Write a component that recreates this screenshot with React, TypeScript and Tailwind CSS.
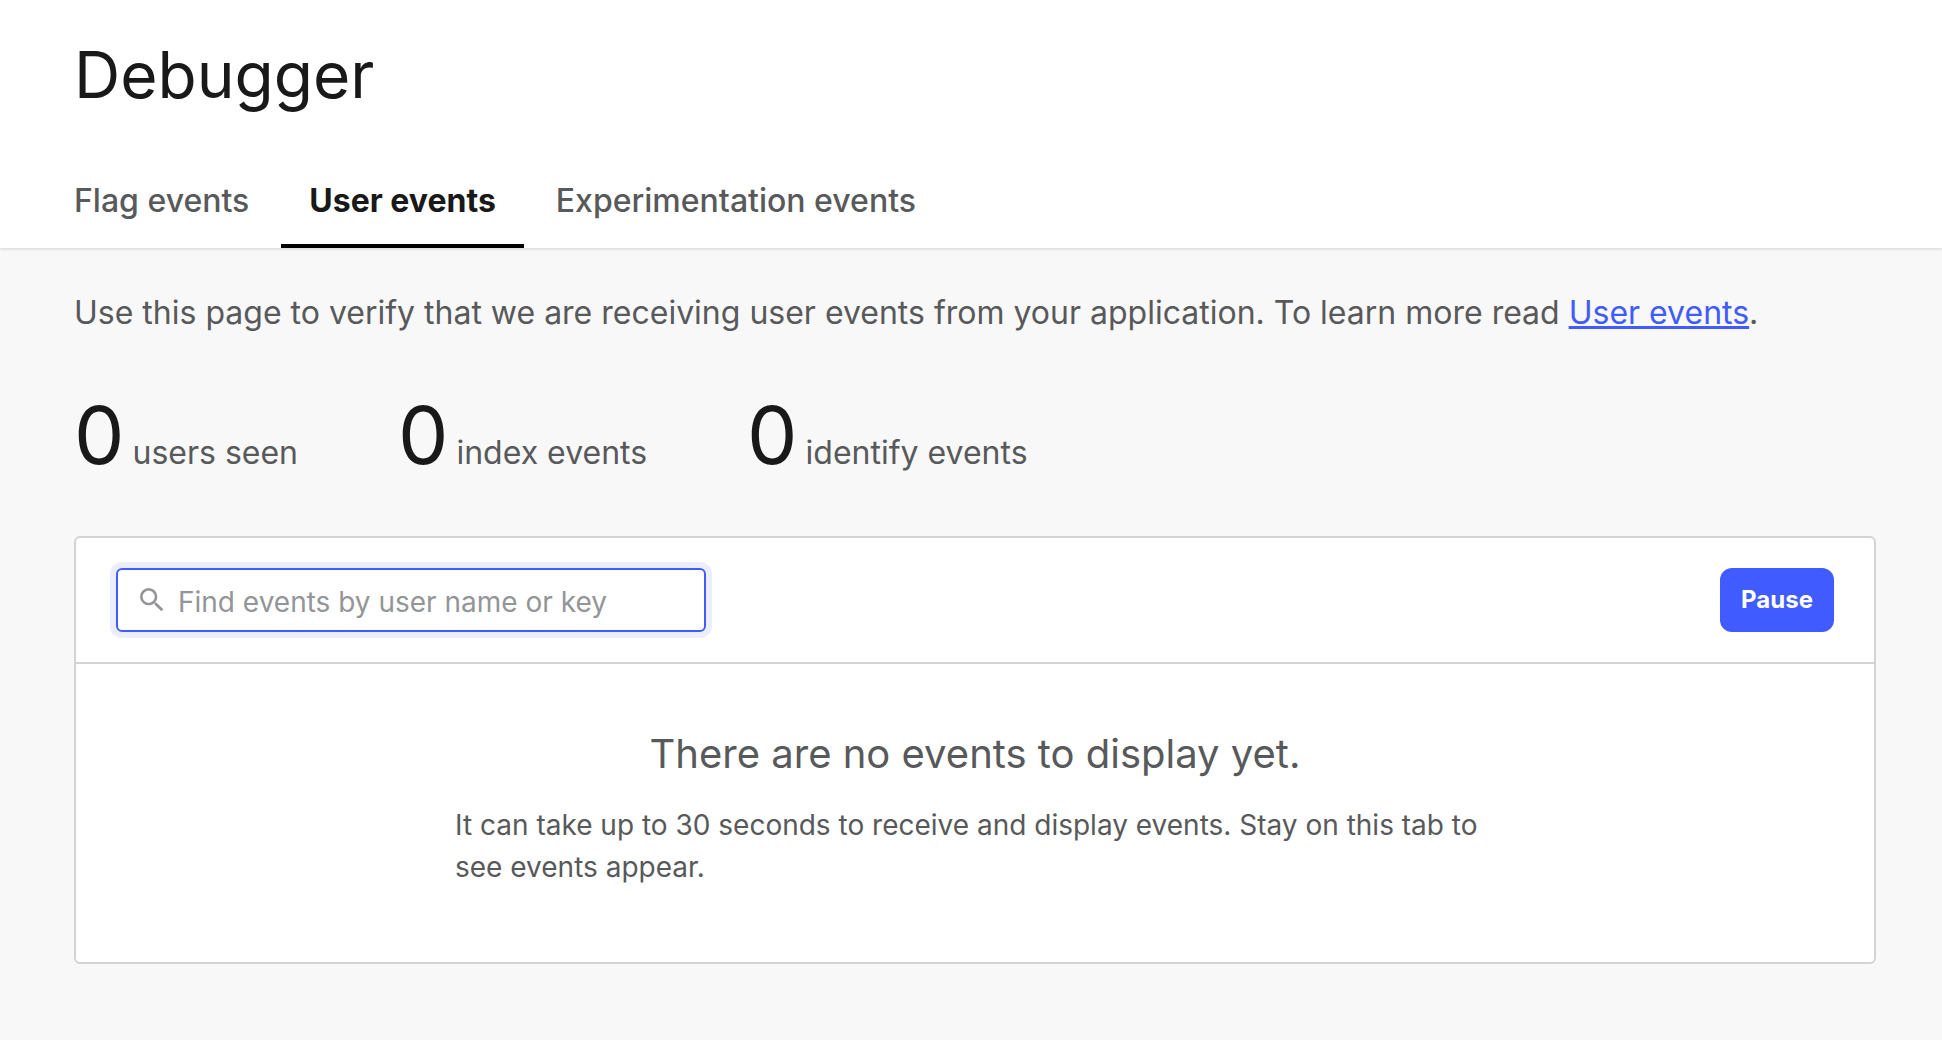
const tabs = [
  { label: "Flag events", active: false },
  { label: "User events", active: true },
  { label: "Experimentation events", active: false },
];

const stats = [
  { value: 0, label: "users seen" },
  { value: 0, label: "index events" },
  { value: 0, label: "identify events" },
];

function Tab({ label, active }: { label: string; active: boolean }) {
  return (
    <button
      type="button"
      role="tab"
      aria-selected={active}
      className={
        active
          ? "h-[76px] border-b-4 border-black px-7 pb-3.5 text-[32px] leading-10 font-bold text-[#191919]"
          : "h-[76px] border-b-4 border-transparent px-7 pb-3.5 text-[32px] leading-10 font-medium text-[#58595b]"
      }
    >
      {label}
    </button>
  );
}

export default function App() {
  return (
    <div className="flex min-h-screen flex-col bg-[#f8f8f8] font-['Inter',sans-serif] text-[#58595b]">
      <header className="bg-white pt-[39px] shadow-[0_2px_2px_#00000018]">
        <h1 className="px-[74px] text-[64px] leading-[72px] text-[#191919]">Debugger</h1>
        <nav role="tablist" className="mt-[61px] flex gap-1 px-[46px]">
          {tabs.map((t) => (
            <Tab key={t.label} {...t} />
          ))}
        </nav>
      </header>
      <main className="pt-[41px] pr-[66px] pb-16 pl-[74px]">
        <p className="text-[32px] leading-[48px]">
          Use this page to verify that we are receiving user events from your application. To learn more read{" "}
          <a href="#user-events" className="text-[#405bff] underline">
            User events
          </a>
          .
        </p>
        <dl className="mt-[50px] flex gap-[100px]">
          {stats.map((s) => (
            <div key={s.label} className="flex flex-row-reverse items-baseline gap-2">
              <dt className="text-[32px] leading-10">{s.label}</dt>
              <dd className="text-[80px] leading-[96px] text-[#191919]">{s.value}</dd>
            </div>
          ))}
        </dl>
        <section className="mt-[53px] rounded-md border-2 border-[#d1d3d4] bg-white">
          <div className="flex items-center justify-between border-b-2 border-[#d1d3d4] px-10 py-[30px]">
            <label className="flex h-16 w-[590px] items-center gap-2.5 rounded-md border-2 border-[#405bff] px-[18px] ring-6 ring-[#eceeff]">
              <svg viewBox="0 0 24 24" className="size-8" fill="#939598" aria-hidden="true">
                <path d="M15.5 14h-.79l-.28-.27A6.47 6.47 0 0 0 16 9.5 6.5 6.5 0 1 0 9.5 16c1.61 0 3.09-.59 4.23-1.57l.27.28v.79l5 4.99L20.49 19l-4.99-5zm-6 0C7.01 14 5 11.99 5 9.5S7.01 5 9.5 5 14 7.01 14 9.5 11.99 14 9.5 14z" />
              </svg>
              <input
                type="text"
                aria-label="Find events by user name or key"
                placeholder="Find events by user name or key"
                className="min-w-0 flex-1 pt-1 text-[28px] leading-9 outline-none placeholder:text-[#939598]"
              />
            </label>
            <button
              type="button"
              className="h-16 min-w-[114px] rounded-xl bg-[#405bff] px-[18px] text-2xl font-bold text-white"
            >
              Pause
            </button>
          </div>
          <div className="flex flex-col items-center px-10 pt-16 pb-[74px]">
            <h2 className="text-[40px] leading-[52px]">There are no events to display yet.</h2>
            <p className="mt-6 w-full max-w-[1040px] text-[28px] leading-[42px]">
              It can take up to 30 seconds to receive and display events. Stay on this tab to see events appear.
            </p>
          </div>
        </section>
      </main>
    </div>
  );
}
